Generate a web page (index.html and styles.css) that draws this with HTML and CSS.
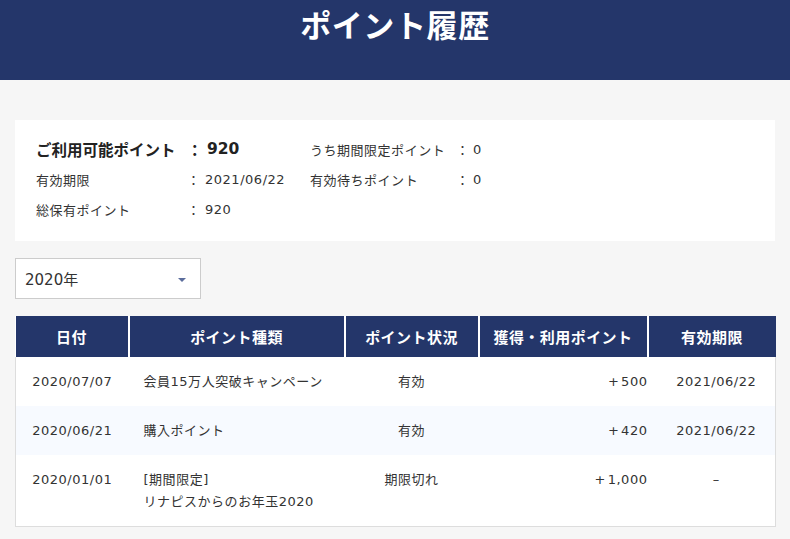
FILE: index.html
```html
<!DOCTYPE html>
<html lang="ja">
<head>
<meta charset="utf-8">
<title>ポイント履歴</title>
<link rel="stylesheet" href="styles.css">
</head>
<body>
<header class="page-header">
  <h1 class="page-title">ポイント履歴</h1>
</header>
<main class="content">
  <section class="summary">
    <div class="summary-row summary-row--main">
      <span class="s-label">ご利用可能ポイント</span>
      <span class="s-colon">：</span>
      <span class="s-value">920</span>
      <span class="s-label2">うち期間限定ポイント</span>
      <span class="s-colon2">：</span>
      <span class="s-value2">0</span>
    </div>
    <div class="summary-row">
      <span class="s-label">有効期限</span>
      <span class="s-colon">：</span>
      <span class="s-value">2021/06/22</span>
      <span class="s-label2">有効待ちポイント</span>
      <span class="s-colon2">：</span>
      <span class="s-value2">0</span>
    </div>
    <div class="summary-row">
      <span class="s-label">総保有ポイント</span>
      <span class="s-colon">：</span>
      <span class="s-value">920</span>
    </div>
  </section>

  <div class="year-select">
    <span class="year-text">2020年</span>
    <span class="caret"></span>
  </div>

  <table class="history">
    <colgroup>
      <col class="c-date"><col class="c-type"><col class="c-status"><col class="c-points"><col class="c-exp">
    </colgroup>
    <thead>
      <tr>
        <th>日付</th>
        <th>ポイント種類</th>
        <th>ポイント状況</th>
        <th>獲得・利用ポイント</th>
        <th>有効期限</th>
      </tr>
    </thead>
    <tbody>
      <tr>
        <td class="t-date">2020/07/07</td>
        <td class="t-type">会員15万人突破キャンペーン</td>
        <td class="t-status">有効</td>
        <td class="t-points">+ 500</td>
        <td class="t-exp">2021/06/22</td>
      </tr>
      <tr class="alt">
        <td class="t-date">2020/06/21</td>
        <td class="t-type">購入ポイント</td>
        <td class="t-status">有効</td>
        <td class="t-points">+ 420</td>
        <td class="t-exp">2021/06/22</td>
      </tr>
      <tr>
        <td class="t-date">2020/01/01</td>
        <td class="t-type">[期間限定]<br>リナピスからのお年玉2020</td>
        <td class="t-status">期限切れ</td>
        <td class="t-points">+ 1,000</td>
        <td class="t-exp">–</td>
      </tr>
    </tbody>
  </table>
</main>
</body>
</html>
```

FILE: styles.css
```css
* { box-sizing: border-box; }
html, body { margin: 0; padding: 0; }
body {
  background: #f6f6f6;
  color: #333;
  font-family: "DejaVu Sans", "Noto Sans CJK JP", sans-serif;
  width: 790px;
  overflow: hidden;
}
.page-header {
  background: #24366a;
  height: 80px;
  padding-top: 4px;
}
.page-title {
  margin: 0;
  text-align: center;
  color: #fff;
  font-family: "Noto Sans CJK JP", sans-serif;
  font-size: 31px;
  line-height: 40px;
  font-weight: 700;
  letter-spacing: 0.02em;
}
.content {
  padding: 40px 15px 0;
}
.summary {
  background: #fff;
  padding: 14px 20px 14px 21px;
  height: 121px;
}
.summary-row {
  display: grid;
  grid-template-columns: 151px 18px 105px 146px 17px 40px;
  align-items: center;
  height: 30px;
  font-size: 13px;
  letter-spacing: 0.04em;
  color: #333;
}
.s-label, .s-label2, .s-colon, .s-colon2 {
  font-family: "Noto Sans CJK JP", sans-serif;
}
.summary-row--main {
  font-size: 15.5px;
  font-weight: 700;
  letter-spacing: 0;
  color: #222;
}
.summary-row--main .s-value { padding-left: 2px; }
.summary-row--main .s-label2,
.summary-row--main .s-colon2,
.summary-row--main .s-value2 {
  font-size: 13px;
  font-weight: 400;
  letter-spacing: 0.04em;
  color: #333;
}
.year-select {
  margin-top: 17px;
  width: 186px;
  height: 41px;
  background: #fff;
  border: 1px solid #ccc;
  display: flex;
  align-items: center;
  justify-content: space-between;
  padding: 0 14px 0 9px;
}
.year-text {
  font-size: 15px;
  color: #333;
}
.caret {
  width: 0;
  height: 0;
  border-left: 4px solid transparent;
  border-right: 4px solid transparent;
  border-top: 4px solid #5b6d9c;
  margin-top: 2px;
}
.history {
  margin-top: 17px;
  width: 760px;
  border-collapse: collapse;
  background: #fff;
  font-size: 13px;
  table-layout: fixed;
}
.c-date { width: 113px; }
.c-type { width: 216px; }
.c-status { width: 134px; }
.c-points { width: 169px; }
.c-exp { width: 128px; }
.history th {
  background: #24366a;
  color: #fff;
  font-family: "Noto Sans CJK JP", sans-serif;
  font-weight: 700;
  font-size: 15px;
  height: 41px;
  padding: 0;
  border-left: 2px solid #fff;
  letter-spacing: 0.03em;
}
.history th:first-child { border-left: 0; }
.history tbody {
  border: 1px solid #ddd;
  border-top: 0;
}
.history td {
  padding: 14px 0 13px;
  line-height: 22px;
  vertical-align: top;
  color: #333;
  letter-spacing: 0.04em;
}
.history tr.alt td { background: #f7faff; }
.t-date { text-align: center; }
.t-type { padding-left: 15px !important; }
.t-status { text-align: center; }
.t-points {
  text-align: right;
  padding-right: 0 !important;
  letter-spacing: 0;
  word-spacing: -3px;
}
.t-exp { text-align: center; padding-left: 10px !important; }
```
